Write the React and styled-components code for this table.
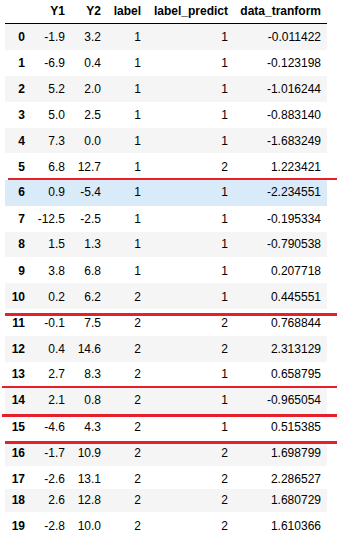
import React from "react";
import styled, { createGlobalStyle } from "styled-components";

const Global = createGlobalStyle`
  html, body { margin: 0; padding: 0; background: #fff; }
  body { font-family: "Liberation Sans", Arial, sans-serif; font-size: 12px; color: #000; }
`;

const Page = styled.div`
  width: 338px;
  height: 536px;
  overflow: hidden;
  display: flex;
  flex-direction: column;
`;

const cols = "26px 40px 36px 40px 87px 93px";

const HeaderRow = styled.div`
  display: grid;
  grid-template-columns: ${cols};
  width: 322px;
  margin-left: 5px;
  height: 23px;
  box-sizing: border-box;
  padding-top: 4px;
  border-bottom: 1px solid #000;
  height: 24px;
`;

const HeadCell = styled.div`
  font-weight: bold;
  text-align: right;
  padding-right: 6px;
  line-height: 14px;
  white-space: nowrap;
`;

const Row = styled.div`
  display: grid;
  grid-template-columns: ${cols};
  width: 322px;
  margin-left: 5px;
  box-sizing: border-box;
  height: ${(p) => p.$h}px;
  padding-top: ${(p) => p.$pad}px;
  background: ${(p) => (p.$tone === "blue" ? "#d9eaf9" : p.$tone === "gray" ? "#f5f5f5" : "#fff")};
  flex-shrink: 0;
`;

const Cell = styled.div`
  text-align: right;
  padding-right: 6px;
  line-height: 14px;
  white-space: nowrap;
  font-weight: ${(p) => (p.$bold ? "bold" : "normal")};
`;

const Mark = styled.div`
  flex-shrink: 0;
  height: ${(p) => p.$h}px;
  margin-top: ${(p) => p.$gap || 0}px;
  margin-left: ${(p) => p.$left}px;
  width: ${(p) => 337 - p.$left}px;
  background: #e5202b;
`;

const headers = ["", "Y1", "Y2", "label", "label_predict", "data_tranform"];

const items = [
  { r: [0, "-1.9", "3.2", 1, 1, "-0.011422"], h: 26, pad: 6, tone: "gray" },
  { r: [1, "-6.9", "0.4", 1, 1, "-0.123198"], h: 26, pad: 6 },
  { r: [2, "5.2", "2.0", 1, 1, "-1.016244"], h: 26, pad: 6, tone: "gray" },
  { r: [3, "5.0", "2.5", 1, 1, "-0.883140"], h: 26, pad: 6 },
  { r: [4, "7.3", "0.0", 1, 1, "-1.683249"], h: 25, pad: 6, tone: "gray" },
  { r: [5, "6.8", "12.7", 1, 2, "1.223421"], h: 25, pad: 7 },
  { mark: true, h: 2, left: 8 },
  { r: [6, "0.9", "-5.4", 1, 1, "-2.234551"], h: 26, pad: 5, tone: "blue" },
  { r: [7, "-12.5", "-2.5", 1, 1, "-0.195334"], h: 26, pad: 6 },
  { r: [8, "1.5", "1.3", 1, 1, "-0.790538"], h: 25, pad: 5, tone: "gray" },
  { r: [9, "3.8", "6.8", 1, 1, "0.207718"], h: 26, pad: 7 },
  { r: [10, "0.2", "6.2", 2, 1, "0.445551"], h: 26, pad: 7, tone: "gray" },
  { mark: true, h: 3, left: 5, gap: 4 },
  { r: [11, "-0.1", "7.5", 2, 2, "0.768844"], h: 20, pad: 0 },
  { r: [12, "0.4", "14.6", 2, 2, "2.313129"], h: 26, pad: 6, tone: "gray" },
  { r: [13, "2.7", "8.3", 2, 1, "0.658795"], h: 24, pad: 5 },
  { mark: true, h: 2, left: 2 },
  { r: [14, "2.1", "0.8", 2, 1, "-0.965054"], h: 26, pad: 5, tone: "gray" },
  { mark: true, h: 3, left: 2 },
  { r: [15, "-4.6", "4.3", 2, 1, "0.515385"], h: 24, pad: 3 },
  { mark: true, h: 3, left: 5 },
  { r: [16, "-1.7", "10.9", 2, 2, "1.698799"], h: 22, pad: 2, tone: "gray" },
  { r: [17, "-2.6", "13.1", 2, 2, "2.286527"], h: 23, pad: 6 },
  { r: [18, "2.6", "12.8", 2, 2, "1.680729"], h: 23, pad: 4, tone: "gray" },
  { r: [19, "-2.8", "10.0", 2, 2, "1.610366"], h: 24, pad: 7 },
];

export default function App() {
  return (
    <>
      <Global />
      <Page>
        <HeaderRow>
          {headers.map((t, i) => (
            <HeadCell key={i}>{t}</HeadCell>
          ))}
        </HeaderRow>
        {items.map((it, i) =>
          it.mark ? (
            <Mark key={i} $h={it.h} $left={it.left} $gap={it.gap} />
          ) : (
            <Row key={i} $h={it.h} $pad={it.pad} $tone={it.tone}>
              {it.r.map((v, j) => (
                <Cell key={j} $bold={j === 0}>
                  {v}
                </Cell>
              ))}
            </Row>
          )
        )}
      </Page>
    </>
  );
}
